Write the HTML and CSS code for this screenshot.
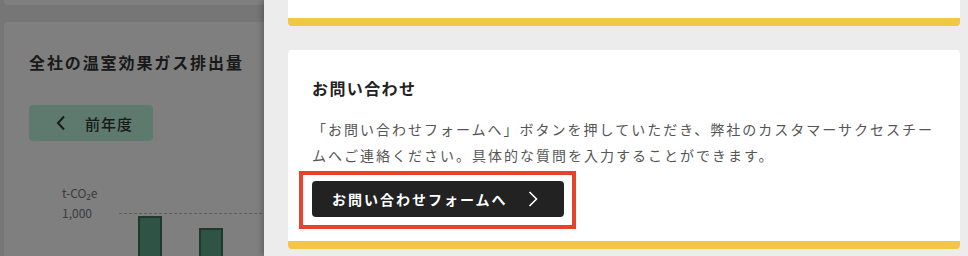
FILE: index.html
```html
<!DOCTYPE html>
<html lang="ja">
<head>
<meta charset="utf-8">
<title>お問い合わせ</title>
<link rel="stylesheet" href="styles.css">
</head>
<body>
<div class="page">
  <div class="page-card page-card-top"></div>
  <section class="page-card chart-card">
    <h2 class="chart-title">全社の温室効果ガス排出量</h2>
    <button class="prev-btn" type="button">
      <svg class="prev-icon" width="12" height="16" viewBox="0 0 12 16"><path d="M9 1.5 L3 8 L9 14.5" fill="none" stroke="currentColor" stroke-width="2"/></svg>
      <span>前年度</span>
    </button>
    <div class="chart">
      <div class="chart-unit">t-CO₂e</div>
      <div class="chart-row">
        <div class="chart-axis">1,000</div>
        <div class="chart-plot">
          <div class="bar" style="height:97px"></div>
          <div class="bar" style="height:85px"></div>
        </div>
      </div>
    </div>
  </section>
</div>
<div class="overlay"></div>
<aside class="drawer">
  <div class="card card-top"></div>
  <section class="card">
    <h3 class="card-title">お問い合わせ</h3>
    <p class="card-text">「お問い合わせフォームへ」ボタンを押していただき、弊社のカスタマーサクセスチームへご連絡ください。具体的な質問を入力することができます。</p>
    <div class="cta-wrap">
      <a class="cta" href="#">
        <span>お問い合わせフォームへ</span>
        <svg class="cta-icon" width="10" height="16" viewBox="0 0 10 16"><path d="M1.5 1 L8.5 8 L1.5 15" fill="none" stroke="currentColor" stroke-width="1.6"/></svg>
      </a>
      <div class="highlight"></div>
    </div>
  </section>
</aside>
</body>
</html>
```
FILE: styles.css
```css
* { box-sizing: border-box; }
html, body { margin: 0; padding: 0; }
body {
  width: 968px;
  height: 256px;
  overflow: hidden;
  background: #ececec;
  font-family: "Noto Sans CJK JP", "Noto Sans", sans-serif;
  color: #333;
}
.page {
  padding-left: 4px;
  width: 968px;
}
.page-card {
  background: #fff;
  border-radius: 4px;
}
.page-card-top {
  height: 5px;
  border-radius: 0 0 4px 4px;
  margin-bottom: 17px;
}
.chart-card {
  padding: 28px 25px 0;
  height: 300px;
}
.chart-title {
  margin: 0;
  font-size: 16px;
  line-height: 24px;
  font-weight: 700;
  letter-spacing: 1.9px;
  color: #333;
}
.prev-btn {
  margin-top: 31px;
  width: 124px;
  height: 36px;
  border: none;
  border-radius: 4px;
  background: #bdf5dd;
  color: #333;
  display: flex;
  align-items: center;
  padding: 0 0 0 26px;
  gap: 18px;
  font-family: inherit;
  font-size: 15px;
  font-weight: 500;
  letter-spacing: 1px;
}
.prev-icon { display: block; }
.chart {
  margin-top: 43px;
  margin-left: 33px;
}
.chart-unit {
  font-size: 12px;
  line-height: 18px;
  color: #777;
}
.chart-row {
  display: flex;
  margin-top: 11px;
}
.chart-axis {
  width: 57px;
  font-size: 12px;
  line-height: 0;
  color: #777;
}
.chart-plot {
  flex: 1;
  height: 100px;
  border-top: 1px dashed #bbb;
  display: flex;
  align-items: flex-end;
  gap: 37px;
  padding-left: 19px;
}
.bar {
  width: 24px;
  background: #5ea88c;
  border: 2px solid #3c745e;
  border-bottom: none;
}
.overlay {
  position: fixed;
  inset: 0;
  background: rgba(0, 0, 0, 0.5);
}
.drawer {
  position: fixed;
  top: 0;
  right: 0;
  bottom: 0;
  width: 704px;
  background: #ececec;
  padding: 0 8px 0 24px;
  box-shadow: -2px 0 6px rgba(0, 0, 0, 0.25);
  display: flex;
  flex-direction: column;
  gap: 24px;
}
.card {
  background: #fff;
  border-radius: 4px;
  border-bottom: 8px solid #f2c744;
  padding: 26px 24px 24px;
}
.card-top {
  height: 26px;
  padding: 0;
  border-radius: 0 0 4px 4px;
}
.card-title {
  margin: 0;
  font-size: 16px;
  line-height: 24px;
  font-weight: 700;
  letter-spacing: 1.4px;
  color: #222;
}
.card-text {
  margin: 17px 0 0;
  font-size: 14px;
  line-height: 25.5px;
  letter-spacing: 2px;
  color: #555;
}
.cta-wrap {
  position: relative;
  margin-top: 13px;
  width: 252px;
}
.cta {
  display: flex;
  align-items: center;
  height: 36px;
  padding-left: 20px;
  gap: 20px;
  background: #222;
  color: #fff;
  border-radius: 4px;
  text-decoration: none;
  font-size: 14px;
  font-weight: 700;
  letter-spacing: 2px;
}
.cta-icon { display: block; }
.highlight {
  position: absolute;
  left: -13px;
  top: -10px;
  right: -12px;
  bottom: -12px;
  border: 4.5px solid #e8432a;
  pointer-events: none;
}
```
